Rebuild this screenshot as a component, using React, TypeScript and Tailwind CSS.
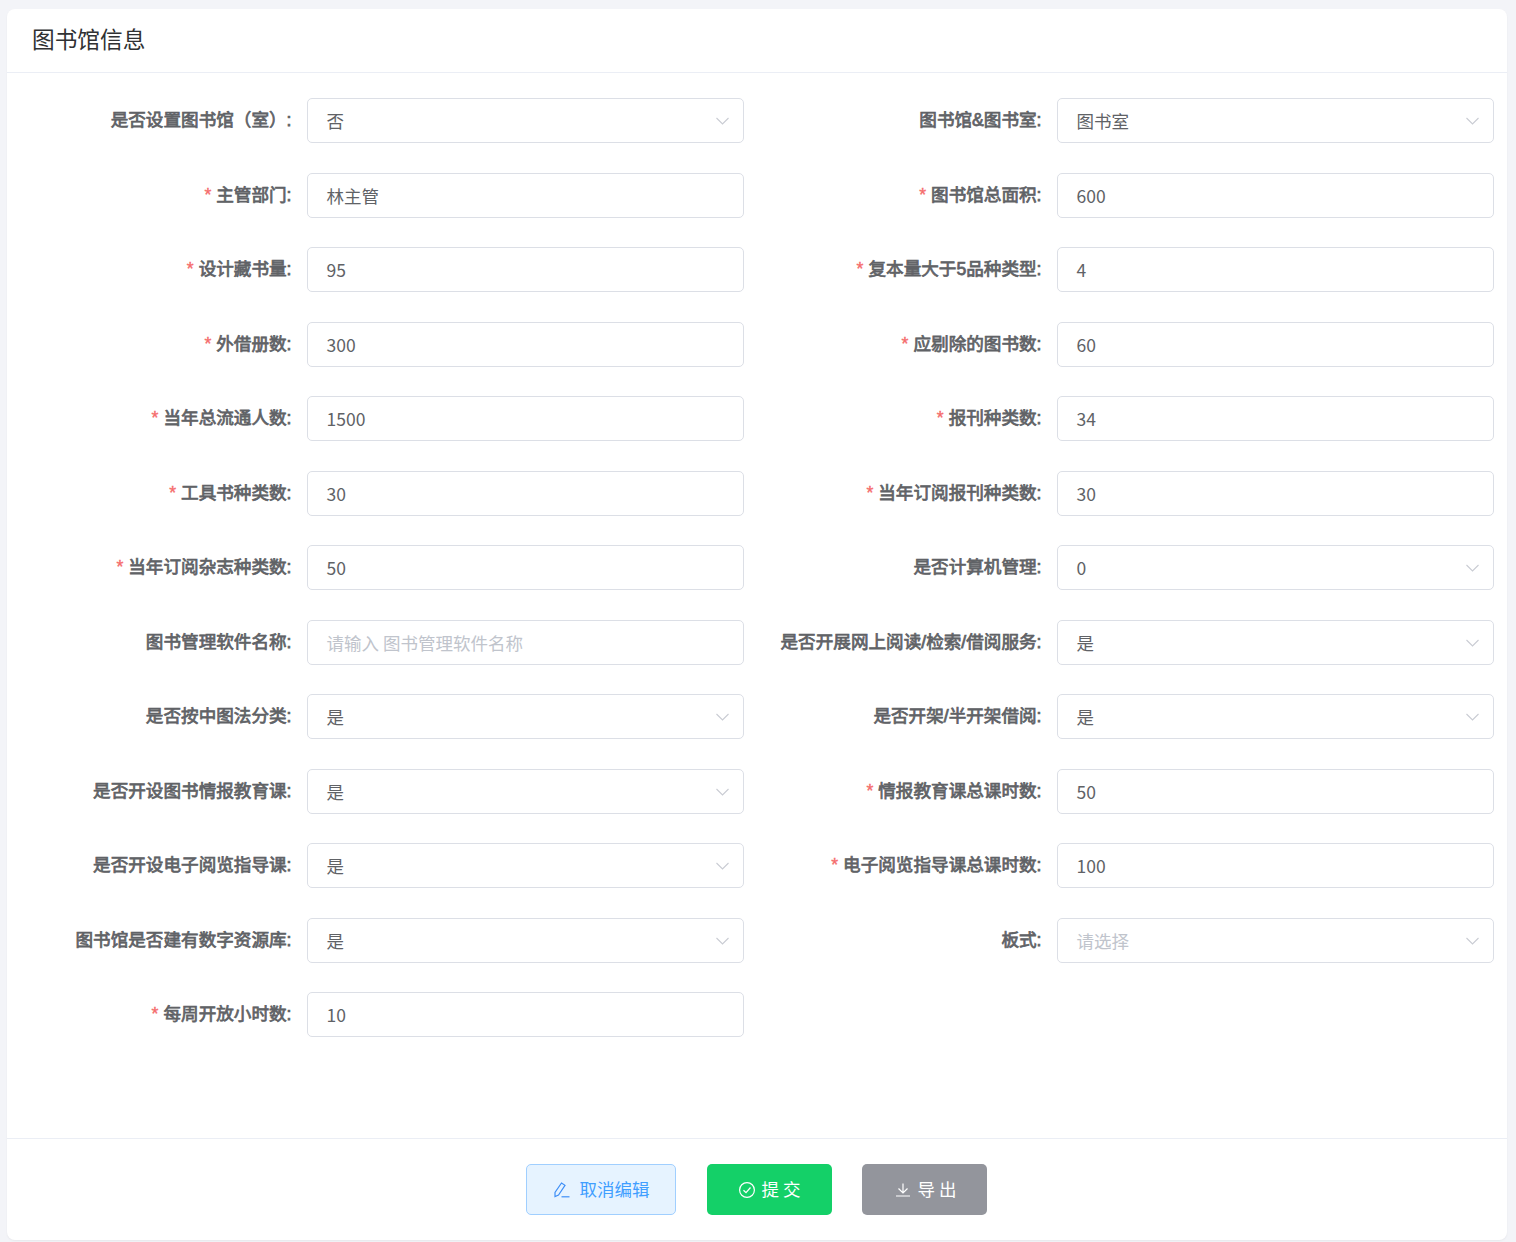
import React from "react"

const FONT = "font-['Noto_Sans_CJK_SC','Noto_Sans',sans-serif]"

type Field = {
  label: string
  value?: string
  placeholder?: string
  required?: boolean
  select?: boolean
}

const fields: Field[] = [
  { label: "是否设置图书馆（室）:", value: "否", select: true },
  { label: "图书馆&图书室:", value: "图书室", select: true },
  { label: "主管部门:", value: "林主管", required: true },
  { label: "图书馆总面积:", value: "600", required: true },
  { label: "设计藏书量:", value: "95", required: true },
  { label: "复本量大于5品种类型:", value: "4", required: true },
  { label: "外借册数:", value: "300", required: true },
  { label: "应剔除的图书数:", value: "60", required: true },
  { label: "当年总流通人数:", value: "1500", required: true },
  { label: "报刊种类数:", value: "34", required: true },
  { label: "工具书种类数:", value: "30", required: true },
  { label: "当年订阅报刊种类数:", value: "30", required: true },
  { label: "当年订阅杂志种类数:", value: "50", required: true },
  { label: "是否计算机管理:", value: "0", select: true },
  { label: "图书管理软件名称:", placeholder: "请输入 图书管理软件名称" },
  { label: "是否开展网上阅读/检索/借阅服务:", value: "是", select: true },
  { label: "是否按中图法分类:", value: "是", select: true },
  { label: "是否开架/半开架借阅:", value: "是", select: true },
  { label: "是否开设图书情报教育课:", value: "是", select: true },
  { label: "情报教育课总课时数:", value: "50", required: true },
  { label: "是否开设电子阅览指导课:", value: "是", select: true },
  { label: "电子阅览指导课总课时数:", value: "100", required: true },
  { label: "图书馆是否建有数字资源库:", value: "是", select: true },
  { label: "板式:", placeholder: "请选择", select: true },
  { label: "每周开放小时数:", value: "10", required: true },
]

function Chevron() {
  return (
    <svg width="15" height="9" viewBox="0 0 15 9" fill="none" stroke="#c9ccd3" strokeWidth="1.1">
      <path d="M1.5 1 L7.5 7 L13.5 1" />
    </svg>
  )
}

function FormField({ field }: { field: Field }) {
  return (
    <div className="flex h-[45px] w-[750px] items-start">
      {/* labels: thickened regular CJK with arial-width latin */}
      <label className="flex h-[45px] w-[300px] shrink-0 items-center justify-end whitespace-nowrap pr-[15.5px] font-['Liberation_Sans','Noto_Sans_CJK_SC',sans-serif] text-[17.6px] font-normal text-[#606266] [-webkit-text-stroke:0.75px_#606266]">
        {field.required && <span className="mr-[5px] text-[#f56c6c] [-webkit-text-stroke:0.4px_#f56c6c]">*</span>}
        {field.label}
      </label>
      <div className="flex h-[45px] w-[437px] items-center justify-between rounded-[5px] border border-[#dcdfe6] bg-white pl-[18.5px] pr-[13px] pt-[2px]">
        {field.value ? (
          <span className="text-[17.5px] text-[#606266]">{field.value}</span>
        ) : (
          <span className="text-[17.5px] text-[#c0c4cc]">{field.placeholder}</span>
        )}
        {field.select && <Chevron />}
      </div>
    </div>
  )
}

export default function App() {
  return (
    <div className={`${FONT} min-h-[1242px] bg-[#f3f4f8] pl-[7px] pr-[9px] pt-[9px]`}>
      <div className="flex h-[1231px] flex-col rounded-[8px] bg-white shadow-[0_1px_2px_rgba(0,0,0,0.05)]">
        <div className="flex h-[64px] shrink-0 items-center border-b border-[#ebeef5] pl-[25px] pb-[3px] text-[22.7px] text-[#303133]">
          图书馆信息
        </div>
        <div className="flex flex-1 flex-wrap content-start gap-y-[29.5px] pt-[25px]">
          {fields.map((field) => (
            <FormField key={field.label} field={field} />
          ))}
        </div>
        <div className="flex h-[102px] shrink-0 items-start justify-center border-t border-[#ebeef5] pr-[2px] pt-[25px]">
          <button className="flex h-[51px] w-[150px] items-center gap-[10px] rounded-[5px] border border-[#a0cfff] bg-[#e6f3ff] pl-[27px] text-[17.5px] text-[#409eff]">
            <svg width="16" height="16" viewBox="0 0 16 16" fill="none" stroke="#3f8ff7" strokeWidth="1.2">
              <path d="M7.5 1 L11 3.3 L4.5 13 L1 14.5 L1 10.5 Z" />
              <path d="M7.5 14.8 H15.5" />
            </svg>
            取消编辑
          </button>
          <button className="ml-[31px] flex h-[51px] w-[125px] items-center gap-[7px] rounded-[5px] bg-[#14d068] pl-[32px] text-[17.5px] tracking-[4px] text-white">
            <svg width="16" height="16" viewBox="0 0 16 16" fill="none" stroke="#ffffff" strokeWidth="1.2">
              <circle cx="8" cy="8" r="7.4" />
              <path d="M4.5 8.3 L7 10.7 L11.5 5.5" />
            </svg>
            提交
          </button>
          <button className="ml-[30px] flex h-[51px] w-[125px] items-center gap-[8px] rounded-[5px] bg-[#93959c] pl-[34px] text-[17.5px] tracking-[4px] text-white">
            <svg width="14" height="14" viewBox="0 0 14 14" fill="none" stroke="#ffffff" strokeWidth="1.2">
              <path d="M7 0.5 V9.5 M2.5 5.5 L7 10 L11.5 5.5 M0 13 H14" />
            </svg>
            导出
          </button>
        </div>
      </div>
    </div>
  )
}
